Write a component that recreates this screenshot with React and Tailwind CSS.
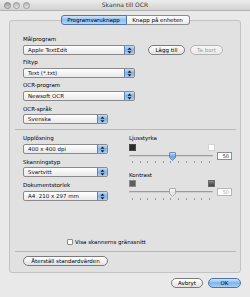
import React from "react";

function Arrows() {
  return (
    <svg width="5" height="7" viewBox="0 0 5 7">
      <path d="M2.5 0.5 L4.5 2.8 L0.5 2.8 Z" fill="#1a1a1a" />
      <path d="M2.5 6.5 L4.5 4.2 L0.5 4.2 Z" fill="#1a1a1a" />
    </svg>
  );
}

function Popup({ className, children }) {
  return (
    <div
      className={
        "flex h-[10px] rounded-[2px] border border-[#8a8a8a] bg-gradient-to-b from-white to-[#e9e9e9] overflow-hidden " +
        className
      }
    >
      <div className="flex-1 pl-[4px] leading-[8px] text-[#111]">{children}</div>
      <div className="w-[10px] flex items-center justify-center border-l border-[#5c86b8] bg-gradient-to-b from-[#c4ddf7] via-[#7fb3ea] to-[#a9cff5]">
        <Arrows />
      </div>
    </div>
  );
}

function Pill({ className, children }) {
  return (
    <div
      className={
        "h-[10px] rounded-full border flex items-center justify-center leading-[8px] " +
        className
      }
    >
      {children}
    </div>
  );
}

function Ticks() {
  const arr = Array.from({ length: 11 });
  return (
    <div className="flex justify-between w-[78px] ml-[3px] h-[2px]">
      {arr.map((_, i) => (
        <div key={i} className="w-px h-[2px] bg-[#9a9a9a]" />
      ))}
    </div>
  );
}

function Knob({ blue }) {
  return (
    <svg width="7" height="9" viewBox="0 0 7 9" className="absolute left-[40px] top-[-0.5px]">
      <defs>
        <linearGradient id={blue ? "kb" : "kw"} x1="0" y1="0" x2="0" y2="1">
          <stop offset="0" stopColor={blue ? "#cfe3fa" : "#ffffff"} />
          <stop offset="0.5" stopColor={blue ? "#6aa6e8" : "#e4e4e4"} />
          <stop offset="1" stopColor={blue ? "#8fc0f2" : "#f2f2f2"} />
        </linearGradient>
      </defs>
      <path
        d="M1 0.5 H6 Q6.5 0.5 6.5 1 V5.5 L3.5 8.5 L0.5 5.5 V1 Q0.5 0.5 1 0.5 Z"
        fill={`url(#${blue ? "kb" : "kw"})`}
        stroke={blue ? "#4f79ad" : "#9a9a9a"}
        strokeWidth="0.8"
      />
    </svg>
  );
}

function Slider({ blue, disabled }) {
  return (
    <div className="flex items-center h-[8px]">
      <div className="relative w-[84px] h-[8px] flex items-center">
        <div className="w-full h-[2px] rounded-full bg-[#9c9c9c] border-b border-[#d0d0d0]" />
        <Knob blue={blue} />
      </div>
      <div
        className={
          "ml-[4px] w-[15px] h-[8px] border bg-white flex items-center justify-end pr-[2px] leading-[6px] text-[5px] " +
          (disabled ? "border-[#b5b5b5] text-[#a8a8a8]" : "border-[#8d8d8d] text-[#222]")
        }
      >
        50
      </div>
    </div>
  );
}

export default function App() {
  return (
    <div className="w-[250px] h-[297px] bg-[#e9e9e9] flex flex-col overflow-hidden text-[5.5px] text-black font-['DejaVu_Sans',sans-serif]">
      {/* Title bar */}
      <div className="h-[11px] flex items-center bg-gradient-to-b from-[#ececec] to-[#d2d2d2] border-b border-[#b3b3b3]">
        <div className="w-[40px] flex gap-[2.5px] pl-[3.5px]">
          <div className="w-[7px] h-[7px] rounded-full bg-gradient-to-b from-[#9b9b9b] to-[#d8d8d8] border border-[#8c8c8c]" />
          <div className="w-[7px] h-[7px] rounded-full bg-gradient-to-b from-[#b5b5b5] to-[#e6e6e6] border border-[#9c9c9c]" />
          <div className="w-[7px] h-[7px] rounded-full bg-gradient-to-b from-[#b5b5b5] to-[#e6e6e6] border border-[#9c9c9c]" />
        </div>
        <div className="flex-1 text-center text-[6px] text-[#333] leading-[10px]">Skanna till OCR</div>
        <div className="w-[40px]" />
      </div>

      <div className="px-[9px] flex flex-col">
        {/* Tabs */}
        <div className="relative z-10 mt-[4px] flex justify-center">
          <div className="w-[66px] h-[10px] rounded-l-[3px] border border-[#4f76a6] bg-gradient-to-b from-[#d2e6fb] via-[#8ebdf0] to-[#b4d6f8] flex items-center justify-center leading-[8px]">
            Programvaruknapp
          </div>
          <div className="w-[63px] h-[10px] rounded-r-[3px] border border-l-0 border-[#8c8c8c] bg-gradient-to-b from-white to-[#ececec] flex items-center justify-center leading-[8px]">
            Knapp på enheten
          </div>
        </div>

        {/* Group box */}
        <div className="-mt-[5px] border border-[#c3c3c3] rounded-[3px] bg-[#e1e1e1] flex flex-col pt-[14px] pb-[6px]">
          <div className="pl-[13px] pr-[8px] flex flex-col">
            <div className="h-[8px] leading-[8px]">Målprogram</div>
            <div className="mt-[2px] flex items-center">
              <Popup className="w-[112px]">Apple TextEdit</Popup>
              <Pill className="ml-[13px] w-[37px] border-[#7b7b7b] bg-gradient-to-b from-white to-[#e2e2e2]">Lägg till</Pill>
              <Pill className="ml-[5px] w-[33px] border-[#b4b4b4] bg-gradient-to-b from-[#f7f7f7] to-[#e9e9e9] text-[#a0a0a0]">Ta bort</Pill>
            </div>
            <div className="mt-[3px] h-[8px] leading-[8px]">Filtyp</div>
            <Popup className="mt-[2px] w-[112px]">Text (*.txt)</Popup>
            <div className="mt-[3px] h-[8px] leading-[8px]">OCR-program</div>
            <Popup className="mt-[2px] w-[112px]">Newsoft OCR</Popup>
            <div className="mt-[4px] h-[8px] leading-[8px]">OCR-språk</div>
            <Popup className="mt-[1px] w-[85px]">Svenska</Popup>
          </div>

          <div className="mt-[5px] ml-[5px] mr-[4px] h-px bg-[#b9b9b9]" />

          <div className="pl-[13px] pr-[8px] mt-[4px] flex">
            <div className="w-[85px] flex flex-col">
              <div className="h-[8px] leading-[8px]">Upplösning</div>
              <Popup className="mt-[2px] w-[85px]">400 x 400 dpi</Popup>
              <div className="mt-[4px] h-[8px] leading-[8px]">Skanningstyp</div>
              <Popup className="mt-[1px] w-[85px]">Svartvitt</Popup>
              <div className="mt-[4px] h-[8px] leading-[8px]">Dokumentstorlek</div>
              <Popup className="mt-[2px] w-[85px]">A4&nbsp;&nbsp;210 x 297 mm</Popup>
            </div>
            <div className="ml-[21px] flex flex-col">
              <div className="h-[8px] leading-[8px]">Ljusstyrka</div>
              <div className="mt-[2px] w-[86px] flex justify-between">
                <div className="w-[7px] h-[7px] bg-[#2b2b2e] border border-[#4a4a4a]" />
                <div className="w-[7px] h-[7px] bg-white border border-[#d4d4d4]" />
              </div>
              <div className="mt-px">
                <Slider blue />
              </div>
              <div className="mt-px">
                <Ticks />
              </div>
              <div className="mt-[8px] h-[8px] leading-[8px]">Kontrast</div>
              <div className="mt-px w-[86px] flex justify-between">
                <div className="w-[7px] h-[7px] bg-[#5e5e5e] border border-[#8a8a8a]" />
                <div className="w-[7px] h-[7px] bg-gradient-to-b from-[#8a8a8a] to-[#3f3f3f] border border-[#6a6a6a]" />
              </div>
              <div className="mt-px">
                <Slider disabled />
              </div>
              <div className="mt-[2px]">
                <Ticks />
              </div>
            </div>
          </div>

          <div className="pl-[57px] mt-[37px] h-[8px] flex items-center">
            <div className="w-[6px] h-[6px] bg-white border border-[#8a8a8a] rounded-[1px]" />
            <div className="ml-[2px] leading-[8px]">Visa skannerns gränssnitt</div>
          </div>

          <div className="mt-[5px] ml-[5px] mr-[4px] h-px bg-[#b9b9b9]" />

          <div className="pl-[13px] mt-[4px]">
            <Pill className="w-[85px] border-[#7b7b7b] bg-gradient-to-b from-white to-[#e2e2e2]">Återställ standardvärden</Pill>
          </div>
        </div>

        <div className="mt-[5px] flex justify-end gap-[5px]">
          <Pill className="w-[32px] border-[#7b7b7b] bg-gradient-to-b from-white to-[#e2e2e2]">Avbryt</Pill>
          <Pill className="w-[33px] border-[#4a74a8] bg-gradient-to-b from-[#cfe4fb] via-[#7fb4ec] to-[#a8d0f7]">OK</Pill>
        </div>
      </div>
    </div>
  );
}
